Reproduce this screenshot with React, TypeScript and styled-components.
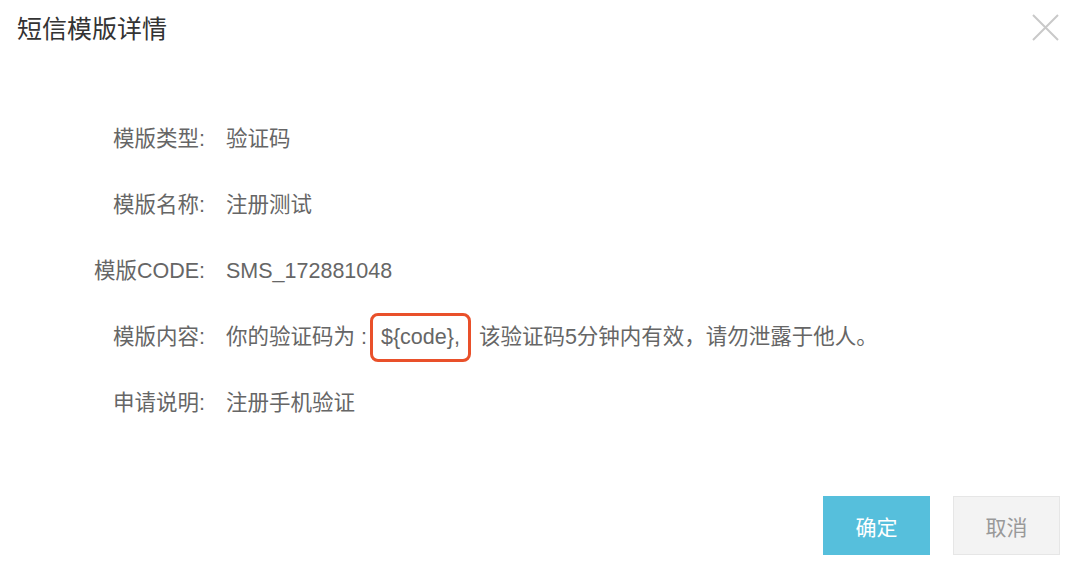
import React from "react";
import styled, { createGlobalStyle } from "styled-components";

const GlobalStyle = createGlobalStyle`
  html, body {
    margin: 0;
    padding: 0;
    background: #ffffff;
  }
  body {
    font-family: "Liberation Sans", "Noto Sans CJK SC", sans-serif;
  }
`;

const Dialog = styled.div`
  position: relative;
  display: flex;
  flex-direction: column;
  width: 1080px;
  height: 577px;
  box-sizing: border-box;
  background: #ffffff;
`;

const Header = styled.div`
  display: flex;
  align-items: center;
  height: 58px;
  padding: 12px 20px 12px 17px;
  box-sizing: border-box;
`;

const Title = styled.h2`
  margin: 0;
  font-size: 25px;
  line-height: 34px;
  font-weight: 400;
  color: #333333;
`;

const CloseButton = styled.button`
  position: absolute;
  top: 14px;
  right: 21px;
  width: 27px;
  height: 27px;
  padding: 0;
  border: none;
  background: transparent;
  cursor: pointer;
`;

const Body = styled.div`
  display: grid;
  grid-template-columns: 205px 1fr;
  column-gap: 21px;
  margin-top: 48px;
`;

const Label = styled.div`
  text-align: right;
  font-size: 21.5px;
  line-height: 66px;
  color: #666666;
  white-space: nowrap;
`;

const Value = styled.div`
  display: flex;
  align-items: center;
  font-size: 21.5px;
  line-height: 66px;
  color: #666666;
  white-space: pre;
`;

const Highlight = styled.span`
  display: inline-block;
  margin: 0 8px 0 3px;
  padding: 0 8px;
  border: 3px solid #e9502a;
  border-radius: 8px;
  line-height: 43px;
`;

const Footer = styled.div`
  display: flex;
  justify-content: flex-end;
  gap: 23px;
  margin-top: auto;
  padding: 0 20px 22px 0;
`;

const Button = styled.button<{ $primary?: boolean }>`
  width: 107px;
  height: 59px;
  box-sizing: border-box;
  font-family: inherit;
  font-size: 21px;
  border: 1px solid ${(p) => (p.$primary ? "#56bfdc" : "#e6e6e6")};
  background: ${(p) => (p.$primary ? "#56bfdc" : "#f3f3f3")};
  color: ${(p) => (p.$primary ? "#ffffff" : "#999999")};
  cursor: pointer;
`;

const rows = [
  { label: "模版类型:", value: "验证码" },
  { label: "模版名称:", value: "注册测试" },
  { label: "模版CODE:", value: "SMS_172881048" },
];

export default function App() {
  return (
    <>
      <GlobalStyle />
      <Dialog>
        <Header>
          <Title>短信模版详情</Title>
        </Header>
        <CloseButton aria-label="close">
          <svg width="27" height="27" viewBox="0 0 27 27">
            <path
              d="M1 1 L26 26 M26 1 L1 26"
              stroke="#c9c9c9"
              strokeWidth="2"
              fill="none"
            />
          </svg>
        </CloseButton>
        <Body>
          {rows.map((r) => (
            <React.Fragment key={r.label}>
              <Label>{r.label}</Label>
              <Value>{r.value}</Value>
            </React.Fragment>
          ))}
          <Label>模版内容:</Label>
          <Value>
            {"你的验证码为 :"}
            <Highlight>{"${code},"}</Highlight>
            {"该验证码5分钟内有效，请勿泄露于他人。"}
          </Value>
          <Label>申请说明:</Label>
          <Value>注册手机验证</Value>
        </Body>
        <Footer>
          <Button $primary>确定</Button>
          <Button>取消</Button>
        </Footer>
      </Dialog>
    </>
  );
}
